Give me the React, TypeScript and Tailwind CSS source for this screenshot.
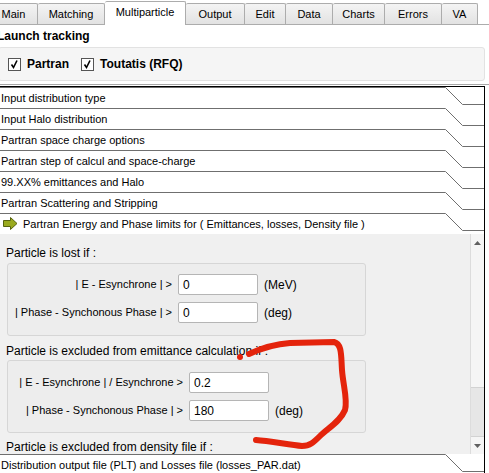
import React from "react";

const tabs = [
  { label: "Main", cls: "w-[48px] -ml-[10px]" },
  { label: "Matching", cls: "w-[67px]" },
  { label: "Multiparticle", cls: "w-[81px]", active: true },
  { label: "Output", cls: "w-[59px]" },
  { label: "Edit", cls: "w-[41px]" },
  { label: "Data", cls: "w-[47px]" },
  { label: "Charts", cls: "w-[52px]" },
  { label: "Errors", cls: "w-[57px]" },
  { label: "VA", cls: "w-[36px]" },
];

const folds = [
  "Input distribution type",
  "Input Halo distribution",
  "Partran space charge options",
  "Partran step of calcul and space-charge",
  "99.XX% emittances and Halo",
  "Partran Scattering and Stripping",
];

const CheckBox = ({ label }: { label: string }) => (
  <label className="flex items-center gap-[6px]">
    <span className="flex h-[13px] w-[13px] items-center justify-center border border-[#555] bg-white">
      <svg width="11" height="11" viewBox="0 0 11 11">
        <path d="M2.5 5.5L4.5 8.5L8 1.5" fill="none" stroke="#000" strokeWidth="1.6" />
      </svg>
    </span>
    <span className="text-[12px] font-bold">{label}</span>
  </label>
);

// toolbox page header with the slanted tab edge on the right
const Fold = ({ label, icon }: { label: string; icon?: boolean }) => (
  <div className="relative h-[21px] shrink-0 bg-white">
    <svg className="absolute left-0 top-0" width="484" height="21" viewBox="0 0 484 21">
      <path d="M0 0.5H445.5L462.5 17.5H484" fill="none" stroke="#6f6f6f" />
    </svg>
    <div className="relative flex h-full items-center gap-[5px] pl-px pt-px text-[11px] whitespace-nowrap">
      {icon && (
        <svg className="ml-[2px]" width="15" height="14" viewBox="0 0 15 14">
          <path d="M0.5 3.5H7.5V0.5L14 6.5L7.5 12.5V9.5H0.5Z" fill="#9aaa1e" stroke="#56630e" />
        </svg>
      )}
      <span>{label}</span>
    </div>
  </div>
);

const Field = ({
  label,
  value,
  unit,
  labelCls,
}: {
  label: string;
  value: string;
  unit?: string;
  labelCls: string;
}) => (
  <div className="flex h-[21px] items-center">
    <div className={`${labelCls} whitespace-nowrap text-right text-[11px]`}>{label}</div>
    <div className="ml-[6px] flex h-[21px] w-[80px] items-center rounded-[2px] border border-[#b5b5b5] bg-white pl-[4px]">
      {value}
    </div>
    {unit && <span className="ml-[6px]">{unit}</span>}
  </div>
);

export default function App() {
  return (
    <div className="relative h-[473px] w-[489px] overflow-hidden bg-white font-['Liberation_Sans',Arial,sans-serif] text-black">
      {/* tab strip */}
      <div className="flex h-[25px] items-end border-b border-[#acacac]">
        {tabs.map((t) =>
          t.active ? (
            <div
              key={t.label}
              className={`${t.cls} relative z-10 -mb-px flex h-[24px] items-center justify-center rounded-t-[2px] border-r border-t border-[#acacac] bg-white pb-[2px] text-[11px]`}
            >
              {t.label}
            </div>
          ) : (
            <div
              key={t.label}
              className={`${t.cls} flex h-[21px] items-center justify-center rounded-t-[2px] border-r border-t border-[#acacac] bg-linear-to-b from-[#f4f4f4] to-[#e2e2e2] text-[11px]`}
            >
              {t.label}
            </div>
          )
        )}
      </div>

      <div className="-ml-[3px] flex h-[22px] items-center text-[12px] font-bold">Launch tracking</div>

      <div className="-ml-[2px] flex h-[34px] w-[487px] items-center gap-[12px] rounded-[3px] border border-[#e2e2e2] bg-[#f5f5f5] pl-[9px]">
        <CheckBox label="Partran" />
        <CheckBox label="Toutatis (RFQ)" />
      </div>

      <div className="mt-[3px] h-px bg-[#a8a8a8]" />
      <div className="h-px" />

      {/* toolbox */}
      <div className="flex h-[387px] w-[485px] flex-col border-r border-t border-black">
        {folds.map((f) => (
          <Fold key={f} label={f} />
        ))}
        <Fold icon label="Partran Energy and Phase limits for ( Emittances, losses, Density file )" />

        <div className="flex h-[220px] shrink-0 bg-[#f0f0f0]">
          <div className="flex-1 overflow-hidden text-[12px]">
            <div className="ml-[6px] mt-[12px] h-[14px] leading-[14px]">Particle is lost if :</div>
            <div className="ml-[7px] mt-[3px] flex h-[73px] w-[359px] flex-col gap-[7px] rounded-[3px] border border-[#d6d6d6] bg-[#ededed] pt-[10px]">
              <Field labelCls="w-[164px]" label="| E - Esynchrone | >" value="0" unit="(MeV)" />
              <Field labelCls="w-[164px]" label="| Phase - Synchonous Phase | >" value="0" unit="(deg)" />
            </div>

            <div className="ml-[6px] mt-[8px] h-[14px] leading-[14px]">
              Particle is excluded from emittance calculation if :
            </div>
            <div className="ml-[7px] mt-[2px] flex h-[73px] w-[359px] flex-col gap-[7px] rounded-[3px] border border-[#d6d6d6] bg-[#ededed] pt-[11px]">
              <Field labelCls="w-[175px]" label="| E - Esynchrone | / Esynchrone >" value="0.2" />
              <Field labelCls="w-[175px]" label="| Phase - Synchonous Phase | >" value="180" unit="(deg)" />
            </div>

            <div className="ml-[6px] mt-[7px] h-[14px] leading-[14px]">Particle is excluded from density file if :</div>
          </div>

          {/* vertical scrollbar */}
          <div className="flex w-[14px] flex-col border-l border-[#dcdcdc] bg-[#f5f5f5]">
            <div className="flex h-[17px] items-center justify-center">
              <svg width="7" height="4" viewBox="0 0 7 4">
                <path d="M0 4L3.5 0L7 4Z" fill="#606060" />
              </svg>
            </div>
            <div className="flex flex-1 flex-col justify-end">
              <div className="h-[50px] border-y border-[#d2d2d2] bg-[#e6e6e6]" />
            </div>
            <div className="flex h-[17px] items-center justify-center">
              <svg width="7" height="4" viewBox="0 0 7 4">
                <path d="M0 0L3.5 4L7 0Z" fill="#606060" />
              </svg>
            </div>
          </div>
        </div>

        <Fold label="Distribution output file (PLT) and Losses file (losses_PAR.dat)" />
      </div>

      {/* red marker scribble */}
      <svg
        className="pointer-events-none absolute left-0 top-0 z-20"
        width="489"
        height="473"
        viewBox="0 0 489 473"
      >
        <circle cx="240" cy="357" r="3" fill="#e4240c" />
        <path
          d="M249 354C262 348 275 344 290 343L334 342C342 344 341 355 342 370C343 385 348 400 345 410C340 422 328 428 320 436C314 442 310 446 302 446C290 445 270 441 256 440"
          fill="none"
          stroke="#e4240c"
          strokeWidth="6"
          strokeLinecap="round"
          strokeLinejoin="round"
        />
      </svg>
    </div>
  );
}
